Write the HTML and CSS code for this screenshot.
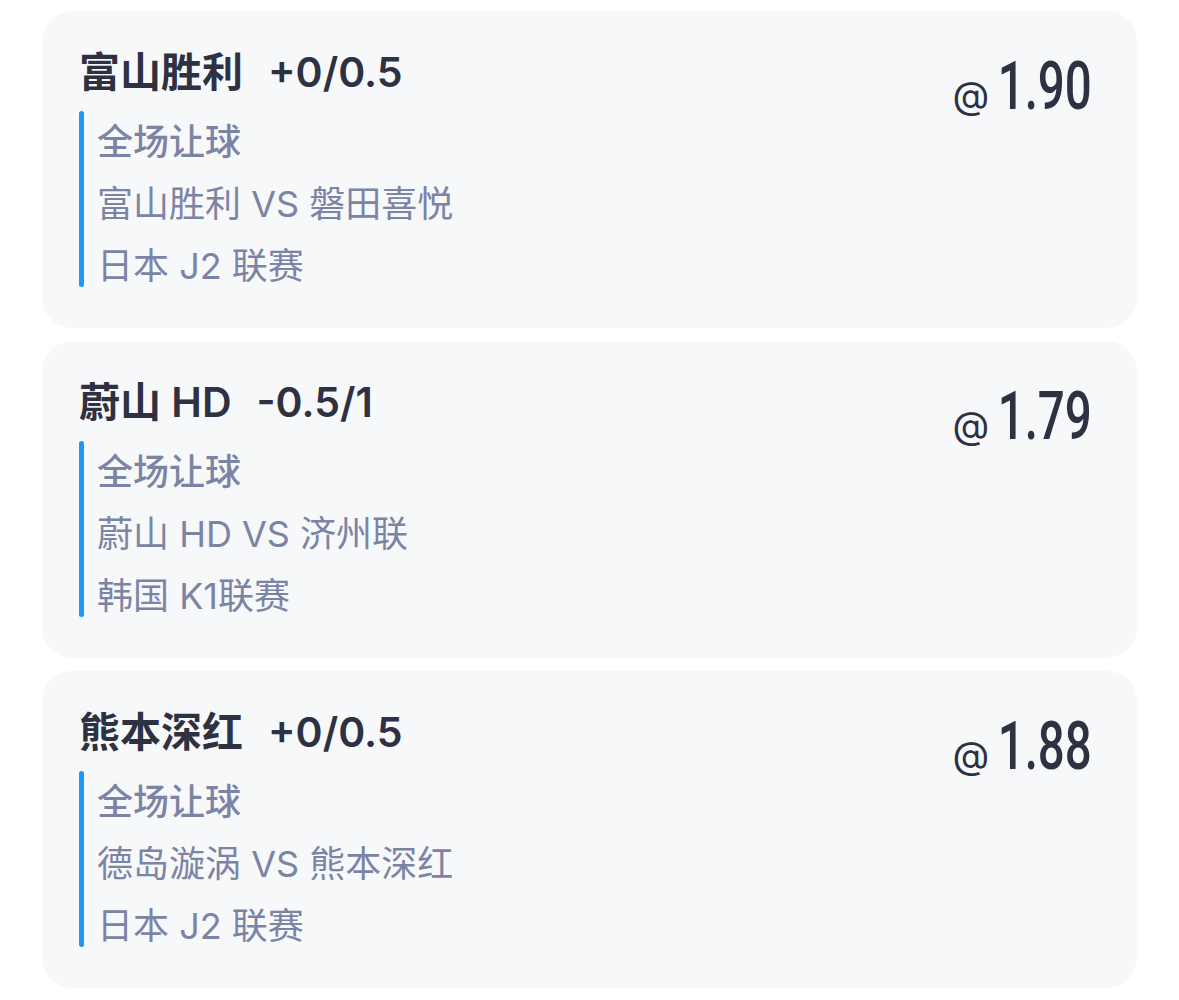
FILE: index.html
```html
<html>
    <head>
        <link rel="stylesheet" href="styles.css">
    </head>
    <body>
        <div class="bet-list">
            <div class="bet-card">
                <div class="bet-main">
                    <div class="bet-title">富山胜利<span class="handicap">+0/0.5</span></div>
                    <div class="bet-info">
                        <div class="info-bar"></div>
                        <div class="info-lines">
                            <div class="market">全场让球</div>
                            <div class="line">富山胜利 VS 磐田喜悦</div>
                            <div class="line last">日本 J2 联赛</div>
                        </div>
                    </div>
                </div>
                <div class="odds"><span class="at">@</span><span class="num">1.90</span></div>
            </div>

            <div class="bet-card">
                <div class="bet-main">
                    <div class="bet-title">蔚山 HD<span class="handicap">-0.5/1</span></div>
                    <div class="bet-info">
                        <div class="info-bar"></div>
                        <div class="info-lines">
                            <div class="market">全场让球</div>
                            <div class="line">蔚山 HD VS 济州联</div>
                            <div class="line last">韩国 K1联赛</div>
                        </div>
                    </div>
                </div>
                <div class="odds"><span class="at">@</span><span class="num">1.79</span></div>
            </div>

            <div class="bet-card">
                <div class="bet-main">
                    <div class="bet-title">熊本深红<span class="handicap">+0/0.5</span></div>
                    <div class="bet-info">
                        <div class="info-bar"></div>
                        <div class="info-lines">
                            <div class="market">全场让球</div>
                            <div class="line">德岛漩涡 VS 熊本深红</div>
                            <div class="line last">日本 J2 联赛</div>
                        </div>
                    </div>
                </div>
                <div class="odds"><span class="at">@</span><span class="num">1.88</span></div>
            </div>
        </div>
    </body>
</html>
```

FILE: styles.css
```css
body {
    margin: 0;
    background-color: white;
    font-family: Inter, "Noto Sans CJK SC", sans-serif;
}

.bet-list {
    display: flex;
    flex-direction: column;
    gap: 13px;

    padding: 11px 42px 0 42px;
}

.bet-card {
    display: flex;
    justify-content: space-between;

    height: 317px;
    box-sizing: border-box;
    padding: 36px 45px 0 37px;

    background-color: #f7f8fa;
    border-radius: 30px;
}

.bet-title {
    height: 50px;
    line-height: 50px;

    font-size: 41px;
    font-weight: 600;
    color: #2d3142;
}

.handicap {
    margin-left: 25px;
}

.bet-info {
    display: flex;
    margin-top: 14px;
}

.info-bar {
    width: 5px;
    border-radius: 3px;
    background-color: #1a99fb;
}

.info-lines {
    padding-left: 13px;

    font-size: 36px;
    line-height: 62px;
    color: #7c84a5;
}

.market {
    font-weight: 500;
}

.last {
    margin-bottom: -10px;
}

.odds {
    display: flex;
    align-items: baseline;

    margin-top: 2px;
    color: #2d3142;
}

.at {
    font-size: 38px;
    margin-right: 8px;
}

/* condensed DIN-like figures */
.num {
    display: inline-block;
    margin-left: -36px;

    font-family: Roboto, sans-serif;
    font-weight: 500;
    font-size: 66px;
    line-height: 76px;

    transform: scaleX(0.72);
    transform-origin: right center;
}
```
